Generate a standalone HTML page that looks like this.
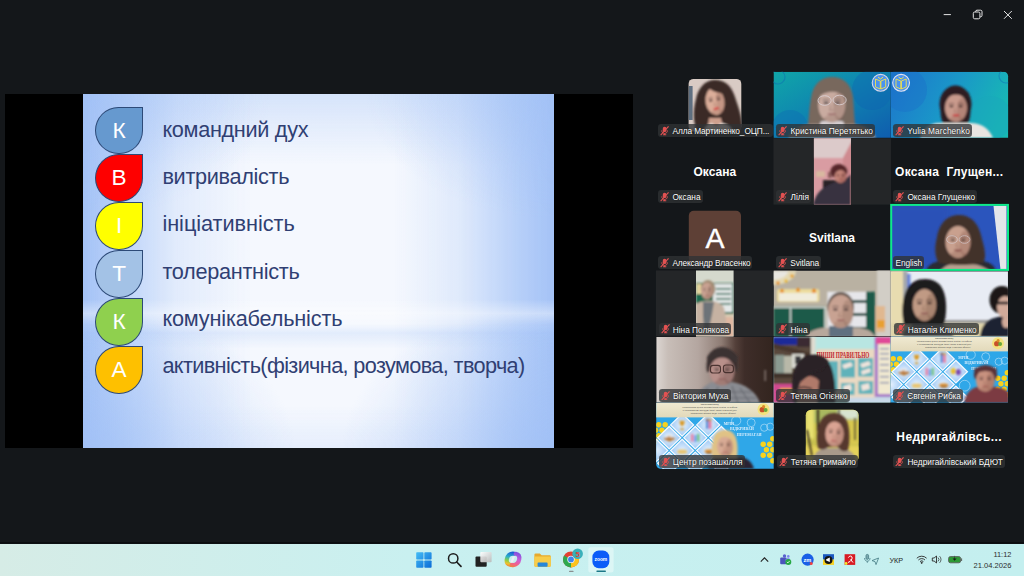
<!DOCTYPE html>
<html lang="uk">
<head>
<meta charset="utf-8">
<title>Zoom Meeting</title>
<style>
html,body{margin:0;padding:0;}
body{width:1024px;height:576px;overflow:hidden;background:#14171a;position:relative;font-family:"Liberation Sans",sans-serif;}
.abs{position:absolute;}
#share{left:4.5px;top:94px;width:628.2px;height:353.8px;background:#000;}
#slide{left:82.6px;top:94px;width:471.8px;height:353.8px;overflow:hidden;
 background:
  linear-gradient(180deg,rgba(166,196,246,0) 0%,rgba(166,196,246,0) 58%,rgba(255,255,255,.4) 62%,rgba(255,255,255,.1) 65%,rgba(166,196,246,.24) 67.5%,rgba(166,196,246,0) 72%),
  radial-gradient(ellipse 45% 40% at 0% 100%,rgba(160,192,246,.7) 0%,rgba(160,192,246,0) 100%),
  radial-gradient(ellipse 45% 40% at 100% 100%,rgba(160,192,246,.7) 0%,rgba(160,192,246,0) 100%),
  radial-gradient(ellipse 40% 35% at 0% 0%,rgba(160,192,246,.5) 0%,rgba(160,192,246,0) 100%),
  radial-gradient(ellipse 40% 35% at 100% 0%,rgba(160,192,246,.5) 0%,rgba(160,192,246,0) 100%),
  linear-gradient(90deg,#a4c2f6 0%,rgba(170,199,247,.8) 7%,rgba(190,212,249,.35) 20%,rgba(200,220,250,0) 36%,rgba(200,220,250,0) 66%,rgba(190,212,249,.4) 80%,rgba(170,199,247,.85) 93%,#a4c2f6 100%),
  linear-gradient(180deg,rgba(176,203,247,.45) 0%,rgba(176,203,247,0) 20%,rgba(176,203,247,0) 88%,rgba(176,203,247,.22) 100%),
  #f5f8fe;}
.drop{position:absolute;left:12.7px;width:47.7px;height:47.8px;border:0.8px solid #2d4a78;border-radius:50% 0 50% 50%;box-sizing:border-box;color:#fff;font-size:22.6px;text-align:center;line-height:45.4px;}
.ln{position:absolute;left:79.8px;font-size:21.7px;color:#303f73;white-space:nowrap;line-height:24px;}
.tile{position:absolute;width:117px;height:66px;overflow:hidden;}
.lbl{position:absolute;box-sizing:border-box;height:12.9px;line-height:15.2px;text-shadow:0 0 1.2px rgba(0,0,0,.9);background:rgba(48,50,53,.78);border-radius:3.2px;color:#fff;font-size:8.3px;white-space:nowrap;overflow:hidden;}
.lbl .mic{position:absolute;left:2.100px;top:1.900px;}
.big{position:absolute;width:117px;text-align:center;color:#fff;font-weight:bold;font-size:12px;line-height:16px;white-space:nowrap;}
#taskbar{left:0;top:543.5px;width:1024px;height:32.5px;background:linear-gradient(90deg,#d6ece6 0%,#c9f0f0 40%,#c4efef 100%);}
</style>
</head>
<body>
<div id="share" class="abs"></div>
<div id="slide" class="abs">
  <div class="drop" style="top:12.5px;background:#6699cf;">К</div>
  <div class="drop" style="top:60.4px;background:#fe0000;">В</div>
  <div class="drop" style="top:108.3px;background:#ffff00;">І</div>
  <div class="drop" style="top:156.2px;background:#a3c2e6;">Т</div>
  <div class="drop" style="top:204.1px;background:#8fd04e;">К</div>
  <div class="drop" style="top:252.0px;background:#fec000;">А</div>
  <div class="ln" style="top:24px;letter-spacing:-0.32px;">командний дух</div>
  <div class="ln" style="top:70.9px;letter-spacing:-0.32px;">витривалість</div>
  <div class="ln" style="top:118.4px;letter-spacing:-0.04px;">ініціативність</div>
  <div class="ln" style="top:165.8px;letter-spacing:-0.3px;">толерантність</div>
  <div class="ln" style="top:213.3px;letter-spacing:-0.18px;">комунікабельність</div>
  <div class="ln" style="top:260.2px;letter-spacing:-0.63px;">активність(фізична, розумова, творча)</div>
</div>
<svg class="abs" style="left:0;top:0" width="1024" height="576" viewBox="0 0 1024 576">
<defs>
<filter id="b1" x="-20%" y="-20%" width="140%" height="140%"><feGaussianBlur stdDeviation="1"/></filter>
<filter id="b2" x="-20%" y="-20%" width="140%" height="140%"><feGaussianBlur stdDeviation="1.4"/></filter>
<filter id="b3" x="-20%" y="-20%" width="140%" height="140%"><feGaussianBlur stdDeviation="3"/></filter>
<linearGradient id="gk" x1="0" y1="0" x2="1" y2="1"><stop offset="0" stop-color="#10a6a8"/><stop offset=".45" stop-color="#0f86b0"/><stop offset="1" stop-color="#0f5cae"/></linearGradient>
<linearGradient id="gy" x1="0" y1="0.2" x2="1" y2="0.5"><stop offset="0" stop-color="#1d78cc"/><stop offset=".5" stop-color="#1a97c8"/><stop offset="1" stop-color="#18b8b4"/></linearGradient>
<linearGradient id="gv" x1="0" y1="0" x2="1" y2="0"><stop offset="0" stop-color="#dcd6d2"/><stop offset=".1" stop-color="#c8beb8"/><stop offset=".36" stop-color="#b4a6a0"/><stop offset=".56" stop-color="#8e7c74"/><stop offset=".68" stop-color="#54403a"/><stop offset=".76" stop-color="#3e2d29"/><stop offset="1" stop-color="#33251f"/></linearGradient>
<linearGradient id="gcream" x1="0" y1="0" x2="0" y2="1"><stop offset="0" stop-color="#f0ead2"/><stop offset="1" stop-color="#e2d9ba"/></linearGradient>
<radialGradient id="gdia" cx=".5" cy=".5" r=".6"><stop offset="0" stop-color="#e6f1fe"/><stop offset="1" stop-color="#8fc0f2"/></radialGradient>
<clipPath id="c00"><rect x="656.3" y="71.8" width="117.25" height="66.0"/></clipPath>
<clipPath id="c01"><rect x="773.5" y="71.8" width="117.25" height="66.0"/></clipPath>
<clipPath id="c02"><rect x="890.7" y="71.8" width="117.25" height="66.0"/></clipPath>
<clipPath id="c10"><rect x="656.3" y="137.9" width="117.25" height="66.0"/></clipPath>
<clipPath id="c11"><rect x="773.5" y="137.9" width="117.25" height="66.0"/></clipPath>
<clipPath id="c12"><rect x="890.7" y="137.9" width="117.25" height="66.0"/></clipPath>
<clipPath id="c20"><rect x="656.3" y="204.0" width="117.25" height="66.0"/></clipPath>
<clipPath id="c21"><rect x="773.5" y="204.0" width="117.25" height="66.0"/></clipPath>
<clipPath id="c22"><rect x="890.7" y="204.0" width="117.25" height="66.0"/></clipPath>
<clipPath id="c30"><rect x="656.3" y="270.2" width="117.25" height="66.0"/></clipPath>
<clipPath id="c31"><rect x="773.5" y="270.2" width="117.25" height="66.0"/></clipPath>
<clipPath id="c32"><rect x="890.7" y="270.2" width="117.25" height="66.0"/></clipPath>
<clipPath id="c40"><rect x="656.3" y="336.4" width="117.25" height="66.0"/></clipPath>
<clipPath id="c41"><rect x="773.5" y="336.4" width="117.25" height="66.0"/></clipPath>
<clipPath id="c42"><rect x="890.7" y="336.4" width="117.25" height="66.0"/></clipPath>
<clipPath id="c50"><rect x="656.3" y="402.6" width="117.25" height="66.0"/></clipPath>
<clipPath id="c51"><rect x="773.5" y="402.6" width="117.25" height="66.0"/></clipPath>
<clipPath id="c52"><rect x="890.7" y="402.6" width="117.25" height="66.0"/></clipPath>
<clipPath id="cav1"><rect x="688.6" y="78.9" width="52.7" height="52.7" rx="5"/></clipPath>
<clipPath id="cav2"><rect x="805.8" y="409.7" width="52.8" height="52.8" rx="5.5"/></clipPath>
<clipPath id="clil"><rect x="813.9" y="138.2" width="37.1" height="66.4"/></clipPath>
<clipPath id="cnp"><rect x="696" y="270.6" width="37.6" height="65.8"/></clipPath>
<clipPath id="ctr"><path d="M890.7 71.8h113a4.4 4.4 0 0 1 4.4 4.4v61.6h-117.4z"/></clipPath>
<clipPath id="cbl"><path d="M656.2 402.7h117.5v66h-113a4.5 4.5 0 0 1-4.5-4.5z"/></clipPath>
</defs>
<g clip-path="url(#cav1)">
<rect x="688" y="78" width="54" height="54" fill="#d9cbc4"/>
<rect x="688.6" y="86" width="4" height="34" fill="#5f6f80"/>
<g filter="url(#b1)">
<path d="M697 132c-4-10-4-22-1-33 2-11 9-19 19-19 11 0 17 7 20 17 3 10 8 20 7 35z" fill="#3b2a26"/>
<path d="M709 118h12l3 14h-17z" fill="#cfa08e"/>
<ellipse cx="715" cy="101.5" rx="9.4" ry="13.6" fill="#dcae9a" transform="rotate(-10 715 101.5)"/>
<path d="M703 100c1-10 6-15 14-15 6 0 10 3 12 9-8 0-16-2-20-6-2 4-4 8-6 12z" fill="#3b2a26"/>
<path d="M703 132c2-5 5-8 9-9l4 4 5-4c6 1 10 4 12 9z" fill="#ece2dc"/>
<g transform="rotate(-10 715 101.5)"><ellipse cx="720.2" cy="102.9" rx="4.2" ry="10.9" fill="#8a5a4a" opacity=".28"/><ellipse cx="715.0" cy="112.1" rx="5.6" ry="2.7" fill="#8a5a4a" opacity=".25"/><ellipse cx="711.1" cy="99.9" rx="1.9" ry="1.0" fill="#2a1a1c" opacity=".8"/><ellipse cx="718.9" cy="99.9" rx="1.9" ry="1.0" fill="#2a1a1c" opacity=".8"/><path d="M708.7 97.6q2.4 -1.1 4.7 0M716.6 97.6q2.4 -1.1 4.7 0" stroke="#2a1a1c" stroke-width="0.8" fill="none" opacity=".6"/><path d="M714.4 101.8l-0.9 3.8h2.8" stroke="#8a5a4a" stroke-width="0.7" fill="none" opacity=".55"/><ellipse cx="715.0" cy="108.6" rx="3.0" ry="1.0" fill="#d4141c" opacity=".85"/></g>
</g></g>
<g clip-path="url(#c01)"><rect x="773.5" y="71.8" width="118.25" height="66.6" fill="url(#gk)"/>
<circle cx="778" cy="77" r="7" fill="none" stroke="#0f7fae" stroke-width="1.2" opacity=".8"/>
<circle cx="790" cy="128" r="18" fill="#0e6fb4" opacity=".45"/>
<circle cx="872" cy="90" r="20" fill="#0d62b2" opacity=".35"/>
<g filter="url(#b1)">
<path d="M805 138c0-6 1-10 3-14 1-8 1-16 3-26 2-14 10-21 21-21 12 0 19 7 21 20 1 10 1 19 2 27 2 4 3 9 3 14z" fill="#78675d"/>
<path d="M788 138c3-9 12-13 24-14h40c12 1 20 5 24 14z" fill="#a39288"/>
<rect x="820" y="121" width="24" height="9" rx="3" fill="#d6cfd2"/>
<ellipse cx="831.8" cy="105" rx="13.6" ry="17.5" fill="#c9aba0"/>
<path d="M817 98q14-12 29-1l2-9q-16-12-32 0z" fill="#78675d"/>
<g transform="rotate(0 831.8 105)"><ellipse cx="839.3" cy="106.8" rx="6.1" ry="14.0" fill="#7a5a50" opacity=".28"/><ellipse cx="831.8" cy="118.7" rx="8.2" ry="3.5" fill="#7a5a50" opacity=".25"/><ellipse cx="826.1" cy="102.9" rx="2.7" ry="1.3" fill="#4a4448" opacity=".8"/><ellipse cx="837.5" cy="102.9" rx="2.7" ry="1.3" fill="#4a4448" opacity=".8"/><path d="M822.7 99.9q3.4 -1.4 6.8 0M834.1 99.9q3.4 -1.4 6.8 0" stroke="#4a4448" stroke-width="1.1" fill="none" opacity=".6"/><path d="M831.0 105.3l-1.4 4.9h4.1" stroke="#7a5a50" stroke-width="0.9" fill="none" opacity=".55"/><ellipse cx="831.8" cy="114.1" rx="4.4" ry="1.2" fill="#9a6a68" opacity=".85"/></g>
</g>
<g fill="none" stroke="#dcd4d8" stroke-width=".9" opacity=".9"><ellipse cx="824.6" cy="100.5" rx="6.6" ry="4.8"/><ellipse cx="839.6" cy="100" rx="6.6" ry="4.8"/></g>
<circle cx="880.6" cy="82.8" r="8.4" fill="#4a93f0" stroke="#d8d8e8" stroke-width="1.1"/><path d="M875.5 79l4.8 2v8l-4.8-2zM885.7 79l-4.8 2v8l4.8-2z" fill="none" stroke="#f3e24a" stroke-width=".9"/><path d="M878 77l2.6 2 2.6-2" fill="none" stroke="#f3e24a" stroke-width="1"/>
</g>
<g clip-path="url(#ctr)"><rect x="890.7" y="71.8" width="118.25" height="66.6" fill="url(#gy)"/>
<circle cx="1006" cy="76" r="7" fill="none" stroke="#1590b8" stroke-width="1.2"/>
<circle cx="990" cy="118" r="22" fill="#19a8bc" opacity=".5"/>
<circle cx="905" cy="90" r="22" fill="#1c6ec8" opacity=".4"/>
<g filter="url(#b1)">
<path d="M920 138c3-9 9-14 18-15h34c11 1 17 6 21 15z" fill="#e9e5e1"/>
<ellipse cx="955.5" cy="104" rx="16" ry="18.5" fill="#2d1c22"/>
<path d="M941 106c-1 8 0 13 2 17h25c2-4 3-9 2-17z" fill="#2d1c22"/>
<ellipse cx="956" cy="108" rx="11" ry="14" fill="#c99a8c"/>
<path d="M944 100q12-11 24 0l1-7q-13-9-26 0z" fill="#2d1c22"/>
<g transform="rotate(0 956 108)"><ellipse cx="962.0" cy="109.4" rx="5.0" ry="11.2" fill="#7a4a40" opacity=".28"/><ellipse cx="956.0" cy="118.9" rx="6.6" ry="2.8" fill="#7a4a40" opacity=".25"/><ellipse cx="951.4" cy="106.3" rx="2.2" ry="1.1" fill="#2a1a1c" opacity=".8"/><ellipse cx="960.6" cy="106.3" rx="2.2" ry="1.1" fill="#2a1a1c" opacity=".8"/><path d="M948.6 103.9q2.8 -1.1 5.5 0M957.9 103.9q2.8 -1.1 5.5 0" stroke="#2a1a1c" stroke-width="0.8" fill="none" opacity=".6"/><path d="M955.3 108.3l-1.1 3.9h3.3" stroke="#7a4a40" stroke-width="0.7" fill="none" opacity=".55"/><ellipse cx="956.0" cy="115.3" rx="3.5" ry="1.0" fill="#c8202a" opacity=".85"/></g>
</g>
<circle cx="901.1" cy="82.8" r="8.4" fill="#4a93f0" stroke="#e4e4f0" stroke-width="1.1"/><path d="M896 79l4.8 2v8l-4.8-2zM906.2 79l-4.8 2v8l4.8-2z" fill="none" stroke="#f3e24a" stroke-width=".9"/><path d="M898.5 77l2.6 2 2.6-2" fill="none" stroke="#f3e24a" stroke-width="1"/>
</g>
<rect x="773.5" y="138.2" width="117.45" height="66.4" fill="#242628"/>
<g clip-path="url(#clil)"><rect x="813" y="138" width="39" height="67" fill="#d99ca2"/>
<g filter="url(#b1)">
<path d="M813 138h39v3l-9 17h-30z" fill="#dccaca"/>
<path d="M843 158l9-17v64h-9z" fill="#cf8a90"/>
<rect x="816" y="171" width="9" height="6" fill="#d8b8a0"/><rect x="828" y="172" width="4" height="6" fill="#8a5a5a"/>
<rect x="823" y="180" width="14" height="25" fill="#2a2228"/>
<path d="M813 205c2-9 7-16 14-19 5-3 9-5 12-5 4 0 8-3 12-7v31z" fill="#37323f"/>
<ellipse cx="839" cy="171.5" rx="8.6" ry="7.6" fill="#56282a"/>
<ellipse cx="840.5" cy="176.5" rx="6" ry="6.4" fill="#c48478"/>
<g transform="rotate(0 840.5 176.5)"><ellipse cx="843.8" cy="177.1" rx="2.7" ry="5.1" fill="#7a3a38" opacity=".28"/><ellipse cx="840.5" cy="181.5" rx="3.6" ry="1.3" fill="#7a3a38" opacity=".25"/><ellipse cx="838.0" cy="175.7" rx="1.2" ry="0.5" fill="#3a1a1c" opacity=".8"/><ellipse cx="843.0" cy="175.7" rx="1.2" ry="0.5" fill="#3a1a1c" opacity=".8"/><path d="M836.5 174.6q1.5 -0.5 3.0 0M841.5 174.6q1.5 -0.5 3.0 0" stroke="#3a1a1c" stroke-width="0.5" fill="none" opacity=".6"/><path d="M840.1 176.6l-0.6 1.8h1.8" stroke="#7a3a38" stroke-width="0.5" fill="none" opacity=".55"/><ellipse cx="840.5" cy="179.8" rx="1.9" ry="0.4" fill="#8a3a38" opacity=".85"/></g>
</g></g>
<rect x="688.8" y="210.8" width="52.2" height="52.2" rx="5" fill="#5e4036"/>
<g clip-path="url(#c22)"><rect x="890.3" y="204" width="118.5" height="66.7" fill="#2b55bd"/>
<rect x="890" y="204" width="60" height="67" fill="#2a4fb2" opacity=".5" filter="url(#b3)"/>
<path d="M993.5 206h13v64h-6z" fill="#e4e6ea"/>
<g filter="url(#b1)">
<path d="M926 271c2-6 7-9 14-10h42c8 1 12 4 14 10z" fill="#2a2a30"/>
<path d="M940 271c4-5 10-8 20-8 12 0 22 2 30 8z" fill="#b8a090"/>
<path d="M938 262c-4-8-3-17-1-25 2-12 9-22 22-22 12 0 19 8 22 20 2 9 6 18 3 27-8 4-36 4-46 0z" fill="#43332c"/>
<ellipse cx="958" cy="242" rx="12.5" ry="16" fill="#c9a08e"/>
<path d="M945 232q10-12 27-2l0-6q-12-10-27 0z" fill="#43332c"/>
<g transform="rotate(0 958 242)"><ellipse cx="964.9" cy="243.6" rx="5.6" ry="12.8" fill="#7a4a40" opacity=".28"/><ellipse cx="958.0" cy="254.5" rx="7.5" ry="3.2" fill="#7a4a40" opacity=".25"/><ellipse cx="952.8" cy="240.1" rx="2.5" ry="1.2" fill="#3a2a28" opacity=".8"/><ellipse cx="963.2" cy="240.1" rx="2.5" ry="1.2" fill="#3a2a28" opacity=".8"/><path d="M949.6 237.4q3.1 -1.3 6.2 0M960.1 237.4q3.1 -1.3 6.2 0" stroke="#3a2a28" stroke-width="1.0" fill="none" opacity=".6"/><path d="M957.2 242.3l-1.2 4.5h3.8" stroke="#7a4a40" stroke-width="0.8" fill="none" opacity=".55"/><ellipse cx="958.0" cy="250.3" rx="4.0" ry="1.1" fill="#7a3a38" opacity=".85"/></g>
</g>
<g fill="none" stroke="#d6ced4" stroke-width=".9" opacity=".7"><ellipse cx="952" cy="239.500" rx="5.400" ry="3.800"/><ellipse cx="964.500" cy="239.500" rx="5.400" ry="3.800"/></g>
</g>
<rect x="891.2" y="204.9" width="116.8" height="65" fill="none" stroke="#0eea8a" stroke-width="2"/>
<rect x="655.9" y="270.5" width="117.4" height="65.9" fill="#242628"/>
<g clip-path="url(#cnp)"><rect x="695" y="270" width="40" height="67" fill="#d5d9cd"/>
<g filter="url(#b1)">
<rect x="696" y="283" width="38" height="31" fill="#1f6b50"/>
<rect x="696.5" y="284" width="5" height="10" fill="#e8d8a0"/>
<rect x="713" y="284" width="19.5" height="28" fill="#e4e8e8"/>
<g fill="#2a6a54"><rect x="716" y="288" width="15" height="1.6"/><rect x="716" y="293" width="15" height="1.6"/><rect x="716" y="298" width="15" height="1.6"/><rect x="716" y="303" width="15" height="1.6"/></g>
<rect x="696" y="314" width="38" height="3" fill="#d8ccb4"/>
<rect x="718" y="317" width="16" height="20" fill="#dfb8a2"/>
<path d="M696 337v-33c3-2 7-3 10-3h7c5 1 9 3 11 7 2 8 3 18 2 29z" fill="#c6b2a2"/>
<path d="M703 302h11l-2 12-3 15h-5l-1-14z" fill="#6d7378"/>
<ellipse cx="708" cy="289" rx="7.4" ry="9" fill="#a08a72"/>
<ellipse cx="707" cy="291" rx="6" ry="8.6" fill="#c9a292"/>
<g transform="rotate(0 707 291)"><ellipse cx="710.3" cy="291.9" rx="2.7" ry="6.9" fill="#7a5a4a" opacity=".28"/><ellipse cx="707.0" cy="297.7" rx="3.6" ry="1.7" fill="#7a5a4a" opacity=".25"/><ellipse cx="704.5" cy="290.0" rx="1.2" ry="0.6" fill="#4a3a38" opacity=".8"/><ellipse cx="709.5" cy="290.0" rx="1.2" ry="0.6" fill="#4a3a38" opacity=".8"/><path d="M703.0 288.5q1.5 -0.7 3.0 0M708.0 288.5q1.5 -0.7 3.0 0" stroke="#4a3a38" stroke-width="0.5" fill="none" opacity=".6"/><path d="M706.6 291.2l-0.6 2.4h1.8" stroke="#7a5a4a" stroke-width="0.5" fill="none" opacity=".55"/><ellipse cx="707.0" cy="295.5" rx="1.9" ry="0.6" fill="#9a5a58" opacity=".85"/></g>
</g></g>
<g clip-path="url(#c31)"><rect x="773.5" y="270.7" width="117.2" height="66" fill="#b9b1a2"/>
<g filter="url(#b1)">
<rect x="877" y="270" width="14" height="67" fill="#d2cec6"/>
<path d="M773 271h23c0 7-8 13-23 14z" fill="#e4d9b4"/><path d="M773 271h15c0 4-5 8-15 9z" fill="#e8e6e0"/><circle cx="792" cy="276" r="1.800" fill="#e8a020"/><circle cx="786" cy="281" r="1.800" fill="#e8b830"/><circle cx="778" cy="283" r="1.800" fill="#e89020"/>
<rect x="776.9" y="289" width="42.5" height="13" rx="2" fill="#ecdc9c"/><rect x="779" y="293" width="38" height="8" fill="#f0ecdc"/>
<circle cx="782" cy="291" r="2" fill="#e89020"/><circle cx="798" cy="290" r="2" fill="#e89020"/><circle cx="814" cy="291" r="2.2" fill="#e89020"/>
<rect x="773.5" y="306.5" width="51.5" height="31" fill="#1f5a49"/>
<path d="M773.5 307.3h51.5M790.5 307v30M825 307v30" stroke="#dfe6e2" stroke-width="1.3" fill="none"/>
<rect x="827.3" y="291.7" width="44" height="45" fill="#e6e6ea"/>
<rect x="866" y="291.7" width="9" height="45" fill="#1f5a49"/>
<g fill="#1f4a40"><rect x="852" y="300" width="14" height="3"/><rect x="852" y="313" width="14" height="3"/><rect x="852" y="327" width="14" height="3"/></g>
<rect x="876" y="306" width="9" height="26" fill="#e0b890"/><rect x="877" y="320" width="8" height="8" fill="#e8a030"/>
<path d="M806 337c2-5 8-8 16-9h38c8 1 13 4 15 9z" fill="#b8a89c"/>
<path d="M829 337v-11h24v11z" fill="#5e7080"/>
<ellipse cx="840.7" cy="307" rx="13.4" ry="15" fill="#6b5b52"/>
<ellipse cx="840.7" cy="311.5" rx="12.6" ry="16.5" fill="#c8a292"/>
<g transform="rotate(0 840.7 311.5)"><ellipse cx="847.6" cy="313.1" rx="5.7" ry="13.2" fill="#7a5a4a" opacity=".28"/><ellipse cx="840.7" cy="324.4" rx="7.6" ry="3.3" fill="#7a5a4a" opacity=".25"/><ellipse cx="835.4" cy="309.5" rx="2.5" ry="1.2" fill="#4a3a3a" opacity=".8"/><ellipse cx="846.0" cy="309.5" rx="2.5" ry="1.2" fill="#4a3a3a" opacity=".8"/><path d="M832.3 306.7q3.1 -1.3 6.3 0M842.8 306.7q3.1 -1.3 6.3 0" stroke="#4a3a3a" stroke-width="1.0" fill="none" opacity=".6"/><path d="M839.9 311.8l-1.3 4.6h3.8" stroke="#7a5a4a" stroke-width="0.8" fill="none" opacity=".55"/><ellipse cx="840.7" cy="320.1" rx="4.0" ry="1.2" fill="#9a6460" opacity=".85"/></g>
</g></g>
<g clip-path="url(#c32)"><rect x="890.7" y="271.4" width="117.5" height="65.2" fill="#e8ecf4"/>
<g filter="url(#b1)">
<rect x="890" y="271" width="13.5" height="66" fill="#e8dcb0"/>
<rect x="903" y="271" width="4.5" height="52" fill="#a4a8ac"/>
<rect x="907" y="274" width="3.4" height="32" fill="#4a6ad0" opacity=".8"/>
<rect x="903" y="320" width="106" height="3.4" fill="#9a9a98"/>
<rect x="890" y="323.4" width="119" height="14" fill="#e0d4a8"/>
<path d="M902 337c2-8 8-12 16-13h18c9 1 15 5 18 13z" fill="#6a6a66"/>
<path d="M904 325c-3-12-2-27 3-36 4-7 10-10 18-10 9 0 15 4 18 11 4 9 4 23 1 35z" fill="#1e1a1e"/>
<ellipse cx="924.5" cy="305" rx="11.8" ry="16" fill="#c09a84"/>
<path d="M912 298q4-10 12-11 9 0 13 11l2-8q-6-10-15-10-9 0-14 10z" fill="#1e1a1e"/>
<g transform="rotate(0 924.5 305)"><ellipse cx="931.0" cy="306.6" rx="5.3" ry="12.8" fill="#6a4a3a" opacity=".28"/><ellipse cx="924.5" cy="317.5" rx="7.1" ry="3.2" fill="#6a4a3a" opacity=".25"/><ellipse cx="919.5" cy="303.1" rx="2.4" ry="1.2" fill="#2a1a1c" opacity=".8"/><ellipse cx="929.5" cy="303.1" rx="2.4" ry="1.2" fill="#2a1a1c" opacity=".8"/><path d="M916.6 300.4q3.0 -1.3 5.9 0M926.5 300.4q3.0 -1.3 5.9 0" stroke="#2a1a1c" stroke-width="1.0" fill="none" opacity=".6"/><path d="M923.8 305.3l-1.2 4.5h3.5" stroke="#6a4a3a" stroke-width="0.8" fill="none" opacity=".55"/><ellipse cx="924.5" cy="313.3" rx="3.8" ry="1.1" fill="#8a5450" opacity=".85"/></g>
<path d="M980 337c1-10 6-17 14-19l15-4v23z" fill="#1a2030"/>
<ellipse cx="1002" cy="300" rx="12.5" ry="14" fill="#1a1618"/>
<ellipse cx="1005" cy="307" rx="8" ry="11" fill="#d2aa9a"/>
<path d="M996 303h13" stroke="#1a1618" stroke-width="2.6"/>
<ellipse cx="1006" cy="322" rx="4" ry="6" fill="#d2aa9a"/>
</g></g>
<g clip-path="url(#c40)"><rect x="656.2" y="337" width="116.4" height="65.8" fill="url(#gv)"/>
<g filter="url(#b1)">
<rect x="764.6" y="370" width="1.2" height="11" fill="#9a8a84"/>
<path d="M694 403c3-10 9-18 19-21h18c15 2 25 10 29 21z" fill="#8a8c92"/>
<path d="M700 400l8-12M712 403l6-16M740 388l10 15M732 386l6 17M704 392h48M700 398h56" stroke="#5e6068" stroke-width="1.200" opacity=".8"/>
<path d="M707 372c-2-12 2-24 15-24 14 0 17 12 15 24z" fill="#3b3030"/>
<ellipse cx="722" cy="371.500" rx="12.400" ry="14" fill="#b8908a"/>
<path d="M708 366q6-9 14-9 9 0 15 9l1-9q-7-10-16-10-9 0-15 10z" fill="#3b3030"/>
<g transform="rotate(0 722 371.5)"><ellipse cx="728.8" cy="372.9" rx="5.6" ry="11.2" fill="#5a3a38" opacity=".28"/><ellipse cx="722.0" cy="382.4" rx="7.4" ry="2.8" fill="#5a3a38" opacity=".25"/><ellipse cx="716.8" cy="369.8" rx="2.5" ry="1.1" fill="#3a2a2a" opacity=".8"/><ellipse cx="727.2" cy="369.8" rx="2.5" ry="1.1" fill="#3a2a2a" opacity=".8"/><path d="M713.7 367.4q3.1 -1.1 6.2 0M724.1 367.4q3.1 -1.1 6.2 0" stroke="#3a2a2a" stroke-width="0.8" fill="none" opacity=".6"/><path d="M721.3 371.8l-1.2 3.9h3.7" stroke="#5a3a38" stroke-width="0.7" fill="none" opacity=".55"/><ellipse cx="722.0" cy="378.8" rx="4.0" ry="1.0" fill="#8a5a58" opacity=".85"/></g>
</g>
<g fill="none" stroke="#3a2624" stroke-width="1.100" opacity=".85"><rect x="710.500" y="365.400" width="10" height="7.600" rx="2.600"/><rect x="723.400" y="365" width="10" height="7.600" rx="2.600"/></g>
</g>
<g clip-path="url(#c41)"><rect x="773.5" y="337" width="117.2" height="66" fill="#b8e6e2"/>
<g filter="url(#b1)">
<rect x="773" y="337" width="38" height="66" fill="#5a4a3e"/>
<rect x="773" y="337" width="24" height="8" fill="#1a2a98"/><rect x="797" y="337" width="13" height="10" fill="#3a2a30"/>
<path d="M773 343l38 10v5l-38-10z" fill="#4a382e"/>
<rect x="775" y="355" width="9" height="19" fill="#8a9a90"/><rect x="784" y="356" width="8" height="18" fill="#b8b8a8"/><rect x="792" y="354" width="12" height="14" fill="#d8d8d0"/><rect x="795" y="356" width="6" height="8" fill="#3a3a40"/>
<rect x="773" y="373" width="26" height="5" fill="#40302a"/>
<rect x="773" y="384" width="28" height="19" fill="#d04890"/><rect x="780" y="388" width="14" height="6" fill="#e8a040"/>
<rect x="811" y="337" width="4.5" height="18" fill="#e0dcd0"/>
<rect x="817" y="349" width="59.6" height="49" fill="#ead9c2"/>
<g fill="#5fb2ba"><rect x="840.5" y="359.5" width="14.5" height="18"/><rect x="858" y="358" width="15" height="18.5"/><rect x="841" y="383" width="13.5" height="12"/><rect x="858.5" y="381" width="14.5" height="13"/><rect x="826" y="361" width="12" height="30"/></g>
<g fill="#f0e4dc"><path d="M842 365l9-3 2 4-9 3z"/><path d="M860 364l9-3 2 4-9 3z"/><path d="M861 371l9-3 1 4-9 3z"/><path d="M843 386l8-2 1 6-8 2z"/><path d="M861 385l8-2 1 6-8 2z"/></g>
<rect x="874.7" y="337" width="16.5" height="60" fill="#a878c8"/><rect x="876" y="337" width="15" height="7" fill="#e04898"/><rect x="878" y="344" width="13" height="50" fill="#f0e8d0"/>
<g fill="#8a90b0"><rect x="880" y="348" width="9" height="1.4"/><rect x="880" y="353" width="9" height="1.4"/><rect x="880" y="358" width="9" height="1.4"/><rect x="880" y="364" width="9" height="1.4"/><rect x="880" y="370" width="9" height="1.4"/><rect x="880" y="376" width="9" height="1.4"/><rect x="880" y="382" width="9" height="1.4"/></g>
<rect x="848" y="397.5" width="43" height="5.5" fill="#c8d8e8"/>
<path d="M794 403c-2-14-2-26 2-36 4-8 10-12 18-12 9 0 15 5 18 14 3 10 4 22 3 34z" fill="#2a2226"/>
<path d="M796 386c0-6 4-10 11-10 6 0 10 2 12 5l-2 22h-20z" fill="#b07a6a"/>
<path d="M798 388q8-2 14 1" stroke="#2a2226" stroke-width="1.4" fill="none"/>
</g>
<text x="816.500" y="358.200" font-family="Liberation Serif,serif" font-weight="bold" font-size="7.800" fill="#c02830" textLength="52.800" lengthAdjust="spacingAndGlyphs">ПИШИ ПРАВИЛЬНО</text>
<path d="M794 403c-2-14-2-26 2-36 4-8 10-12 18-12 6 0 11 2 14 7l-6 8-10 2-12 10z" fill="#2a2226" filter="url(#b1)"/>
</g>
<g clip-path="url(#c42)"><rect x="890.2" y="336.2" width="118.5" height="67" fill="#2fa7e8"/>
<circle cx="893.2" cy="358.7" r="2.7" fill="#f8d21e"/>
<circle cx="899.7" cy="358.7" r="2.7" fill="#f8d21e"/>
<circle cx="890.2" cy="364.2" r="2.7" fill="#f8d21e"/>
<circle cx="896.5" cy="364.2" r="2.7" fill="#f8d21e"/>
<circle cx="893.2" cy="369.7" r="2.7" fill="#f8d21e"/>
<circle cx="890.2" cy="375.2" r="2.7" fill="#f8d21e"/>
<circle cx="902.7" cy="364.2" r="2.7" fill="#f8d21e"/>
<circle cx="997.7" cy="378.2" r="2.7" fill="#f8d21e"/>
<circle cx="1004.2" cy="378.2" r="2.7" fill="#f8d21e"/>
<circle cx="1007.3" cy="372.7" r="2.7" fill="#f8d21e"/>
<circle cx="1000.9" cy="383.7" r="2.7" fill="#f8d21e"/>
<circle cx="1007.3" cy="383.7" r="2.7" fill="#f8d21e"/>
<circle cx="997.7" cy="389.2" r="2.7" fill="#f8d21e"/>
<circle cx="1004.2" cy="389.2" r="2.7" fill="#f8d21e"/>
<circle cx="1007.3" cy="394.7" r="2.7" fill="#f8d21e"/>
<g fill="none" stroke="#bfe2f8" stroke-width=".7" opacity=".9"><circle cx="970.7" cy="354.7" r="4.6"/><circle cx="985.7" cy="356.7" r="4"/><circle cx="964.7" cy="385.7" r="5.4"/><circle cx="998.7" cy="361.7" r="3.6"/><circle cx="1004.7" cy="360.7" r="3.6"/></g>
<path d="M916.6 347.7L928.1 358.9L916.6 370.1L905.1 358.9z" fill="url(#gdia)" stroke="#f4f9ff" stroke-width="1.3"/>
<path d="M942.7 347.7L954.2 358.9L942.7 370.1L931.2 358.9z" fill="url(#gdia)" stroke="#f4f9ff" stroke-width="1.3"/>
<path d="M903.7 360.5L915.2 371.7L903.7 382.9L892.2 371.7z" fill="url(#gdia)" stroke="#f4f9ff" stroke-width="1.3"/>
<path d="M929.8 360.5L941.3 371.7L929.8 382.9L918.3 371.7z" fill="url(#gdia)" stroke="#f4f9ff" stroke-width="1.3"/>
<path d="M955.9 360.5L967.4 371.7L955.9 382.9L944.4 371.7z" fill="url(#gdia)" stroke="#f4f9ff" stroke-width="1.3"/>
<path d="M916.6 373.3L928.1 384.5L916.6 395.7L905.1 384.5z" fill="url(#gdia)" stroke="#f4f9ff" stroke-width="1.3"/>
<path d="M942.7 373.3L954.2 384.5L942.7 395.7L931.2 384.5z" fill="url(#gdia)" stroke="#f4f9ff" stroke-width="1.3"/>
<path d="M890.7 373.3L902.2 384.5L890.7 395.7L879.2 384.5z" fill="url(#gdia)" stroke="#f4f9ff" stroke-width="1.3"/>
<path d="M903.7 386.1L915.2 397.3L903.7 408.5L892.2 397.3z" fill="url(#gdia)" stroke="#f4f9ff" stroke-width="1.3"/>
<path d="M929.8 386.1L941.3 397.3L929.8 408.5L918.3 397.3z" fill="url(#gdia)" stroke="#f4f9ff" stroke-width="1.3"/>
<path d="M955.9 386.1L967.4 397.3L955.9 408.5L944.4 397.3z" fill="url(#gdia)" stroke="#f4f9ff" stroke-width="1.3"/>
<rect x="890.2" y="336.2" width="118.5" height="15.2" fill="url(#gcream)"/>
<g filter="url(#b1)">
<path d="M914.1 354.7h5c0 4-1 5-2.5 5.4v2.2h1.6v1.6h-3.2v-1.6h1.6v-2.2c-1.5-.4-2.5-1.4-2.5-5.4z" fill="#d89a28"/>
<rect x="940.7" y="354.7" width="2.2" height="8.4" rx="1" fill="#3a7ad0"/><rect x="943.5" y="354.7" width="2.2" height="8.4" rx="1" fill="#e86a90"/><circle cx="941.8000000000001" cy="354.09999999999997" r="1.3" fill="#7a4a30"/><circle cx="944.6" cy="354.09999999999997" r="1.3" fill="#c89030"/>
<path d="M897.7 372.7l6-2.6 6.5 2.6-6.2 3z" fill="#b87a3a"/><rect x="900.7" y="368.7" width="1.6" height="3" fill="#f0e8e0"/><rect x="904.3000000000001" y="368.3" width="1.6" height="3.4" fill="#f0e8e0"/>
<rect x="925.7" y="367.7" width="2" height="8" rx="1" fill="#e86a90"/><rect x="928.7" y="368.7" width="2" height="7.6" rx="1" fill="#4a8ae0"/><rect x="931.7" y="367.7" width="2" height="8" rx="1" fill="#5ab86a"/>
<ellipse cx="953.3000000000001" cy="371.09999999999997" rx="2.6" ry="3.2" fill="#e8c030"/><ellipse cx="958.3000000000001" cy="372.09999999999997" rx="2.6" ry="3.2" fill="#7a4ab0"/>
<ellipse cx="916.7" cy="385.7" rx="5" ry="2.2" fill="#e8c470"/><ellipse cx="943.7" cy="385.3" rx="4.6" ry="2" fill="#d8923a"/><rect x="940.7" y="386.3" width="6" height="1.4" fill="#8a5a2a"/>
</g>
<g font-family="Liberation Serif,serif" font-size="1.9" font-weight="bold" fill="#4a4a48" text-anchor="middle">
<text x="944.2" y="339.3">Комунальний заклад</text>
<text x="944.2" y="342.2" textLength="55">«Роменський центр позашкільної освіти та роботи</text>
<text x="944.2" y="345.0" textLength="54">з талановитою молоддю імені Івана Кавалерідзе»</text>
<text x="947.7" y="347.8" textLength="45">Роменської міської ради Сумської області</text></g>
<circle cx="998.0" cy="343.3" r="6" fill="#f3e37e"/><circle cx="996.7" cy="343.7" r="2.6" fill="#c8502a"/><circle cx="1000.1" cy="344.09999999999997" r="2" fill="#6aa83a"/><circle cx="998.1" cy="340.7" r="1.6" fill="#d88a2a"/>
<g font-family="Liberation Serif,serif" font-size="3.7" font-weight="bold" fill="#e8f4ff" opacity=".92">
<text x="958.3000000000001" y="358.5" textLength="10.2" lengthAdjust="spacingAndGlyphs">МРІЙ</text>
<text x="964.5" y="364.3" textLength="23.8" lengthAdjust="spacingAndGlyphs">ВІДКРИВАЙ</text>
<text x="971.2" y="370.09999999999997" textLength="24.8" lengthAdjust="spacingAndGlyphs">ПЕРЕМАГАЙ</text></g>
<g filter="url(#b1)"><path d="M964 403.5c1-9 6-15 14-17h14c9 1 14 3 17 6v11z" fill="#7c3a42"/><ellipse cx="985.5" cy="374.5" rx="11.6" ry="9.6" fill="#5a3038"/><ellipse cx="985.3" cy="380.6" rx="9.4" ry="11.2" fill="#c8927f"/><path d="M975 374q10-6 21 0l1-5q-11-7-23 0z" fill="#5a3038"/><g transform="rotate(0 985.3 380.6)"><ellipse cx="990.5" cy="381.7" rx="4.2" ry="9.0" fill="#7a4a40" opacity=".28"/><ellipse cx="985.3" cy="389.3" rx="5.6" ry="2.2" fill="#7a4a40" opacity=".25"/><ellipse cx="981.4" cy="379.3" rx="1.9" ry="0.8" fill="#3a2428" opacity=".8"/><ellipse cx="989.2" cy="379.3" rx="1.9" ry="0.8" fill="#3a2428" opacity=".8"/><path d="M979.0 377.4q2.4 -0.9 4.7 0M986.9 377.4q2.4 -0.9 4.7 0" stroke="#3a2428" stroke-width="0.7" fill="none" opacity=".6"/><path d="M984.7 380.8l-0.9 3.1h2.8" stroke="#7a4a40" stroke-width="0.6" fill="none" opacity=".55"/><ellipse cx="985.3" cy="386.4" rx="3.0" ry="0.8" fill="#9a5450" opacity=".85"/></g></g>
</g>
<g clip-path="url(#cbl)"><rect x="655.7" y="402.2" width="118.5" height="67" fill="#2fa7e8"/>
<circle cx="658.7" cy="424.7" r="2.7" fill="#f8d21e"/>
<circle cx="665.2" cy="424.7" r="2.7" fill="#f8d21e"/>
<circle cx="655.7" cy="430.2" r="2.7" fill="#f8d21e"/>
<circle cx="662.0" cy="430.2" r="2.7" fill="#f8d21e"/>
<circle cx="658.7" cy="435.7" r="2.7" fill="#f8d21e"/>
<circle cx="655.7" cy="441.2" r="2.7" fill="#f8d21e"/>
<circle cx="668.2" cy="430.2" r="2.7" fill="#f8d21e"/>
<circle cx="763.2" cy="444.2" r="2.7" fill="#f8d21e"/>
<circle cx="769.7" cy="444.2" r="2.7" fill="#f8d21e"/>
<circle cx="772.8" cy="438.7" r="2.7" fill="#f8d21e"/>
<circle cx="766.4" cy="449.7" r="2.7" fill="#f8d21e"/>
<circle cx="772.8" cy="449.7" r="2.7" fill="#f8d21e"/>
<circle cx="763.2" cy="455.2" r="2.7" fill="#f8d21e"/>
<circle cx="769.7" cy="455.2" r="2.7" fill="#f8d21e"/>
<circle cx="772.8" cy="460.7" r="2.7" fill="#f8d21e"/>
<g fill="none" stroke="#bfe2f8" stroke-width=".7" opacity=".9"><circle cx="736.2" cy="420.7" r="4.6"/><circle cx="751.2" cy="422.7" r="4"/><circle cx="730.2" cy="451.7" r="5.4"/><circle cx="764.2" cy="427.7" r="3.6"/><circle cx="770.2" cy="426.7" r="3.6"/></g>
<path d="M682.1 413.7L693.6 424.9L682.1 436.1L670.6 424.9z" fill="url(#gdia)" stroke="#f4f9ff" stroke-width="1.3"/>
<path d="M708.2 413.7L719.7 424.9L708.2 436.1L696.7 424.9z" fill="url(#gdia)" stroke="#f4f9ff" stroke-width="1.3"/>
<path d="M669.2 426.5L680.7 437.7L669.2 448.9L657.7 437.7z" fill="url(#gdia)" stroke="#f4f9ff" stroke-width="1.3"/>
<path d="M695.3 426.5L706.8 437.7L695.3 448.9L683.8 437.7z" fill="url(#gdia)" stroke="#f4f9ff" stroke-width="1.3"/>
<path d="M721.4 426.5L732.9 437.7L721.4 448.9L709.9 437.7z" fill="url(#gdia)" stroke="#f4f9ff" stroke-width="1.3"/>
<path d="M682.1 439.3L693.6 450.5L682.1 461.7L670.6 450.5z" fill="url(#gdia)" stroke="#f4f9ff" stroke-width="1.3"/>
<path d="M708.2 439.3L719.7 450.5L708.2 461.7L696.7 450.5z" fill="url(#gdia)" stroke="#f4f9ff" stroke-width="1.3"/>
<path d="M656.2 439.3L667.7 450.5L656.2 461.7L644.7 450.5z" fill="url(#gdia)" stroke="#f4f9ff" stroke-width="1.3"/>
<path d="M669.2 452.1L680.7 463.3L669.2 474.5L657.7 463.3z" fill="url(#gdia)" stroke="#f4f9ff" stroke-width="1.3"/>
<path d="M695.3 452.1L706.8 463.3L695.3 474.5L683.8 463.3z" fill="url(#gdia)" stroke="#f4f9ff" stroke-width="1.3"/>
<path d="M721.4 452.1L732.9 463.3L721.4 474.5L709.9 463.3z" fill="url(#gdia)" stroke="#f4f9ff" stroke-width="1.3"/>
<rect x="655.7" y="402.2" width="118.5" height="15.2" fill="url(#gcream)"/>
<g filter="url(#b1)">
<path d="M679.6 420.7h5c0 4-1 5-2.5 5.4v2.2h1.6v1.6h-3.2v-1.6h1.6v-2.2c-1.5-.4-2.5-1.4-2.5-5.4z" fill="#d89a28"/>
<rect x="706.2" y="420.7" width="2.2" height="8.4" rx="1" fill="#3a7ad0"/><rect x="709.0" y="420.7" width="2.2" height="8.4" rx="1" fill="#e86a90"/><circle cx="707.3000000000001" cy="420.09999999999997" r="1.3" fill="#7a4a30"/><circle cx="710.1" cy="420.09999999999997" r="1.3" fill="#c89030"/>
<path d="M663.2 438.7l6-2.6 6.5 2.6-6.2 3z" fill="#b87a3a"/><rect x="666.2" y="434.7" width="1.6" height="3" fill="#f0e8e0"/><rect x="669.8000000000001" y="434.3" width="1.6" height="3.4" fill="#f0e8e0"/>
<rect x="691.2" y="433.7" width="2" height="8" rx="1" fill="#e86a90"/><rect x="694.2" y="434.7" width="2" height="7.6" rx="1" fill="#4a8ae0"/><rect x="697.2" y="433.7" width="2" height="8" rx="1" fill="#5ab86a"/>
<ellipse cx="718.8000000000001" cy="437.09999999999997" rx="2.6" ry="3.2" fill="#e8c030"/><ellipse cx="723.8000000000001" cy="438.09999999999997" rx="2.6" ry="3.2" fill="#7a4ab0"/>
<ellipse cx="682.2" cy="451.7" rx="5" ry="2.2" fill="#e8c470"/><ellipse cx="709.2" cy="451.3" rx="4.6" ry="2" fill="#d8923a"/><rect x="706.2" y="452.3" width="6" height="1.4" fill="#8a5a2a"/>
</g>
<g font-family="Liberation Serif,serif" font-size="1.9" font-weight="bold" fill="#4a4a48" text-anchor="middle">
<text x="709.7" y="405.3">Комунальний заклад</text>
<text x="709.7" y="408.2" textLength="55">«Роменський центр позашкільної освіти та роботи</text>
<text x="709.7" y="411.0" textLength="54">з талановитою молоддю імені Івана Кавалерідзе»</text>
<text x="713.2" y="413.8" textLength="45">Роменської міської ради Сумської області</text></g>
<circle cx="763.5" cy="409.3" r="6" fill="#f3e37e"/><circle cx="762.2" cy="409.7" r="2.6" fill="#c8502a"/><circle cx="765.6" cy="410.09999999999997" r="2" fill="#6aa83a"/><circle cx="763.6" cy="406.7" r="1.6" fill="#d88a2a"/>
<g font-family="Liberation Serif,serif" font-size="3.7" font-weight="bold" fill="#e8f4ff" opacity=".92">
<text x="723.8000000000001" y="424.5" textLength="10.2" lengthAdjust="spacingAndGlyphs">МРІЙ</text>
<text x="730.0" y="430.3" textLength="23.8" lengthAdjust="spacingAndGlyphs">ВІДКРИВАЙ</text>
<text x="736.7" y="436.09999999999997" textLength="24.8" lengthAdjust="spacingAndGlyphs">ПЕРЕМАГАЙ</text></g>
<g filter="url(#b1)"><path d="M708 469c1-7 4-11 10-12h22c8 1 12 5 14 12z" fill="#2a2430"/><path d="M712 458c-1-9 0-16 2-21 3-5 6-7 11-7 6 0 9 3 11 8 2 6 2 13 1 20z" fill="#e0c286"/><ellipse cx="725" cy="446.5" rx="8" ry="10.4" fill="#d8aa94"/><path d="M716 441q8-8 17-1l1-5q-9-7-19 0z" fill="#e0c286"/><g transform="rotate(0 725 446.5)"><ellipse cx="729.4" cy="447.5" rx="3.6" ry="8.3" fill="#8a5a4a" opacity=".28"/><ellipse cx="725.0" cy="454.6" rx="4.8" ry="2.1" fill="#8a5a4a" opacity=".25"/><ellipse cx="721.6" cy="445.3" rx="1.6" ry="0.8" fill="#4a3430" opacity=".8"/><ellipse cx="728.4" cy="445.3" rx="1.6" ry="0.8" fill="#4a3430" opacity=".8"/><path d="M719.6 443.5q2.0 -0.8 4.0 0M726.4 443.5q2.0 -0.8 4.0 0" stroke="#4a3430" stroke-width="0.6" fill="none" opacity=".6"/><path d="M724.5 446.7l-0.8 2.9h2.4" stroke="#8a5a4a" stroke-width="0.5" fill="none" opacity=".55"/><ellipse cx="725.0" cy="451.9" rx="2.6" ry="0.7" fill="#b05a58" opacity=".85"/></g></g>
</g>
<g clip-path="url(#cav2)"><rect x="805" y="409" width="55" height="55" fill="#c9c04e"/>
<g filter="url(#b2)">
<rect x="805" y="409" width="55" height="14" fill="#a8b860"/><rect x="838" y="409" width="20" height="10" fill="#d8e4d0"/>
<rect x="806" y="409" width="8" height="30" fill="#e8e070"/>
<rect x="805" y="446" width="55" height="18" fill="#e4d25a"/>
<rect x="845" y="420" width="14" height="24" fill="#d8c850"/>
</g><g filter="url(#b1)">
<path d="M807 430l5 26" stroke="#3a3020" stroke-width="1.8"/><path d="M818 409v22" stroke="#3a3020" stroke-width="2.2"/><path d="M839 409v8M855 418v22" stroke="#4a4028" stroke-width="1.3"/>
<path d="M812 464c1-9 5-14 12-16h18c7 1 11 5 13 9v7z" fill="#a99a8a"/>
<path d="M818 448c-2-10-1-20 2-26 3-6 8-9 14-9 7 0 12 4 14 11 2 8 2 18 0 26-4 3-8 0-10-3h-10c-3 3-7 3-10 1z" fill="#57392f"/>
<ellipse cx="834.5" cy="434" rx="9.2" ry="12.6" fill="#d9a393"/>
<path d="M824 428q8-12 19-6l1-4q-10-8-21 2z" fill="#57392f"/>
<g transform="rotate(6 834.5 434)"><ellipse cx="839.6" cy="435.3" rx="4.1" ry="10.1" fill="#8a5a4a" opacity=".28"/><ellipse cx="834.5" cy="443.8" rx="5.5" ry="2.5" fill="#8a5a4a" opacity=".25"/><ellipse cx="830.6" cy="432.5" rx="1.8" ry="0.9" fill="#3a2a28" opacity=".8"/><ellipse cx="838.4" cy="432.5" rx="1.8" ry="0.9" fill="#3a2a28" opacity=".8"/><path d="M828.3 430.3q2.3 -1.0 4.6 0M836.1 430.3q2.3 -1.0 4.6 0" stroke="#3a2a28" stroke-width="0.8" fill="none" opacity=".6"/><path d="M833.9 434.3l-0.9 3.5h2.8" stroke="#8a5a4a" stroke-width="0.6" fill="none" opacity=".55"/><ellipse cx="834.5" cy="440.6" rx="2.9" ry="0.9" fill="#b05a58" opacity=".85"/></g>
</g></g>
</svg>
<div class="lbl" id="l0" style="left:658.3px;top:124.1px;width:114.6px;padding-left:14.2px;letter-spacing:-0.09px;"><svg class="mic" width="9.2" height="9.6" viewBox="0 0 10 10.4"><rect x="3" y="0.9" width="4" height="5.6" rx="2" fill="#e25252"/><path d="M1.900 4.800c0 2.100 1.400 3.300 3.100 3.300s3.100-1.200 3.100-3.300" fill="none" stroke="#e25252" stroke-width="1"/><path d="M5 8.100v1.300M3.200 9.600h3.600" fill="none" stroke="#e25252" stroke-width="1.100"/><path d="M9.300 0.500L0.700 9.900" stroke="#e25252" stroke-width="1.200"/></svg><span>Алла Мартиненко_ОЦП...</span></div>
<div class="lbl" id="l1" style="left:776.3px;top:124.1px;width:98.4px;padding-left:14.2px;"><svg class="mic" width="9.2" height="9.6" viewBox="0 0 10 10.4"><rect x="3" y="0.9" width="4" height="5.6" rx="2" fill="#e25252"/><path d="M1.900 4.800c0 2.100 1.400 3.300 3.100 3.300s3.100-1.200 3.100-3.300" fill="none" stroke="#e25252" stroke-width="1"/><path d="M5 8.100v1.300M3.200 9.600h3.600" fill="none" stroke="#e25252" stroke-width="1.100"/><path d="M9.300 0.500L0.700 9.900" stroke="#e25252" stroke-width="1.200"/></svg><span>Кристина Перетятько</span></div>
<div class="lbl" id="l2" style="left:893.1px;top:124.1px;width:78.8px;padding-left:14.2px;letter-spacing:0.09px;"><svg class="mic" width="9.2" height="9.6" viewBox="0 0 10 10.4"><rect x="3" y="0.9" width="4" height="5.6" rx="2" fill="#e25252"/><path d="M1.900 4.800c0 2.100 1.400 3.300 3.100 3.300s3.100-1.200 3.100-3.300" fill="none" stroke="#e25252" stroke-width="1"/><path d="M5 8.100v1.300M3.200 9.600h3.600" fill="none" stroke="#e25252" stroke-width="1.100"/><path d="M9.300 0.500L0.700 9.900" stroke="#e25252" stroke-width="1.200"/></svg><span>Yulia Marchenko</span></div>
<div class="lbl" id="l3" style="left:658.2px;top:190.2px;width:44.5px;padding-left:14.2px;"><svg class="mic" width="9.2" height="9.6" viewBox="0 0 10 10.4"><rect x="3" y="0.9" width="4" height="5.6" rx="2" fill="#e25252"/><path d="M1.900 4.800c0 2.100 1.400 3.300 3.100 3.300s3.100-1.200 3.100-3.300" fill="none" stroke="#e25252" stroke-width="1"/><path d="M5 8.100v1.300M3.200 9.600h3.600" fill="none" stroke="#e25252" stroke-width="1.100"/><path d="M9.300 0.500L0.700 9.900" stroke="#e25252" stroke-width="1.200"/></svg><span>Оксана</span></div>
<div class="lbl" id="l4" style="left:776.3px;top:190.2px;width:34.3px;padding-left:14.2px;"><svg class="mic" width="9.2" height="9.6" viewBox="0 0 10 10.4"><rect x="3" y="0.9" width="4" height="5.6" rx="2" fill="#e25252"/><path d="M1.900 4.800c0 2.100 1.400 3.300 3.100 3.300s3.100-1.200 3.100-3.300" fill="none" stroke="#e25252" stroke-width="1"/><path d="M5 8.100v1.300M3.200 9.600h3.600" fill="none" stroke="#e25252" stroke-width="1.100"/><path d="M9.300 0.500L0.700 9.900" stroke="#e25252" stroke-width="1.200"/></svg><span>Лілія</span></div>
<div class="lbl" id="l5" style="left:893.2px;top:190.2px;width:84.2px;padding-left:14.2px;"><svg class="mic" width="9.2" height="9.6" viewBox="0 0 10 10.4"><rect x="3" y="0.9" width="4" height="5.6" rx="2" fill="#e25252"/><path d="M1.900 4.800c0 2.100 1.400 3.300 3.100 3.300s3.100-1.200 3.100-3.300" fill="none" stroke="#e25252" stroke-width="1"/><path d="M5 8.100v1.300M3.200 9.600h3.600" fill="none" stroke="#e25252" stroke-width="1.100"/><path d="M9.300 0.500L0.700 9.900" stroke="#e25252" stroke-width="1.200"/></svg><span>Оксана Глущенко</span></div>
<div class="lbl" id="l6" style="left:658.2px;top:256.3px;width:94.2px;padding-left:14.2px;letter-spacing:-0.13px;"><svg class="mic" width="9.2" height="9.6" viewBox="0 0 10 10.4"><rect x="3" y="0.9" width="4" height="5.6" rx="2" fill="#e25252"/><path d="M1.900 4.800c0 2.100 1.400 3.300 3.100 3.300s3.100-1.200 3.100-3.300" fill="none" stroke="#e25252" stroke-width="1"/><path d="M5 8.100v1.300M3.200 9.600h3.600" fill="none" stroke="#e25252" stroke-width="1.100"/><path d="M9.300 0.500L0.700 9.900" stroke="#e25252" stroke-width="1.200"/></svg><span>Александр Власенко</span></div>
<div class="lbl" id="l7" style="left:776.0px;top:256.3px;width:44.9px;padding-left:14.2px;letter-spacing:-0.09px;"><svg class="mic" width="9.2" height="9.6" viewBox="0 0 10 10.4"><rect x="3" y="0.9" width="4" height="5.6" rx="2" fill="#e25252"/><path d="M1.900 4.800c0 2.100 1.400 3.300 3.100 3.300s3.100-1.200 3.100-3.300" fill="none" stroke="#e25252" stroke-width="1"/><path d="M5 8.100v1.300M3.200 9.600h3.600" fill="none" stroke="#e25252" stroke-width="1.100"/><path d="M9.300 0.500L0.700 9.900" stroke="#e25252" stroke-width="1.200"/></svg><span>Svitlana</span></div>
<div class="lbl" id="l8" style="left:893.1px;top:256.3px;width:31.3px;padding-left:2.4px;letter-spacing:-0.1px;"><span>English</span></div>
<div class="lbl" id="l9" style="left:658.6px;top:322.5px;width:72.2px;padding-left:14.2px;"><svg class="mic" width="9.2" height="9.6" viewBox="0 0 10 10.4"><rect x="3" y="0.9" width="4" height="5.6" rx="2" fill="#e25252"/><path d="M1.900 4.800c0 2.100 1.400 3.300 3.100 3.300s3.100-1.200 3.100-3.300" fill="none" stroke="#e25252" stroke-width="1"/><path d="M5 8.100v1.300M3.200 9.600h3.600" fill="none" stroke="#e25252" stroke-width="1.100"/><path d="M9.300 0.500L0.700 9.900" stroke="#e25252" stroke-width="1.200"/></svg><span>Ніна Полякова</span></div>
<div class="lbl" id="l10" style="left:776.3px;top:322.5px;width:33.4px;padding-left:14.2px;"><svg class="mic" width="9.2" height="9.6" viewBox="0 0 10 10.4"><rect x="3" y="0.9" width="4" height="5.6" rx="2" fill="#e25252"/><path d="M1.900 4.800c0 2.100 1.400 3.300 3.100 3.300s3.100-1.200 3.100-3.300" fill="none" stroke="#e25252" stroke-width="1"/><path d="M5 8.100v1.300M3.200 9.600h3.600" fill="none" stroke="#e25252" stroke-width="1.100"/><path d="M9.300 0.500L0.700 9.900" stroke="#e25252" stroke-width="1.200"/></svg><span>Ніна</span></div>
<div class="lbl" id="l11" style="left:893.5px;top:322.5px;width:85.1px;padding-left:14.2px;letter-spacing:-0.05px;"><svg class="mic" width="9.2" height="9.6" viewBox="0 0 10 10.4"><rect x="3" y="0.9" width="4" height="5.6" rx="2" fill="#e25252"/><path d="M1.900 4.800c0 2.100 1.400 3.300 3.100 3.300s3.100-1.200 3.100-3.300" fill="none" stroke="#e25252" stroke-width="1"/><path d="M5 8.100v1.300M3.200 9.600h3.600" fill="none" stroke="#e25252" stroke-width="1.100"/><path d="M9.300 0.500L0.700 9.900" stroke="#e25252" stroke-width="1.200"/></svg><span>Наталія Клименко</span></div>
<div class="lbl" id="l12" style="left:658.9px;top:388.7px;width:71.9px;padding-left:14.2px;"><svg class="mic" width="9.2" height="9.6" viewBox="0 0 10 10.4"><rect x="3" y="0.9" width="4" height="5.6" rx="2" fill="#e25252"/><path d="M1.900 4.800c0 2.100 1.400 3.300 3.100 3.300s3.100-1.200 3.100-3.300" fill="none" stroke="#e25252" stroke-width="1"/><path d="M5 8.100v1.300M3.200 9.600h3.600" fill="none" stroke="#e25252" stroke-width="1.100"/><path d="M9.300 0.500L0.700 9.900" stroke="#e25252" stroke-width="1.200"/></svg><span>Віктория Муха</span></div>
<div class="lbl" id="l13" style="left:776.3px;top:388.7px;width:73.3px;padding-left:14.2px;"><svg class="mic" width="9.2" height="9.6" viewBox="0 0 10 10.4"><rect x="3" y="0.9" width="4" height="5.6" rx="2" fill="#e25252"/><path d="M1.900 4.800c0 2.100 1.400 3.300 3.100 3.300s3.100-1.200 3.100-3.300" fill="none" stroke="#e25252" stroke-width="1"/><path d="M5 8.100v1.300M3.200 9.600h3.600" fill="none" stroke="#e25252" stroke-width="1.100"/><path d="M9.300 0.500L0.700 9.900" stroke="#e25252" stroke-width="1.200"/></svg><span>Тетяна Огієнко</span></div>
<div class="lbl" id="l14" style="left:893.1px;top:388.7px;width:69.7px;padding-left:14.2px;letter-spacing:-0.06px;"><svg class="mic" width="9.2" height="9.6" viewBox="0 0 10 10.4"><rect x="3" y="0.9" width="4" height="5.6" rx="2" fill="#e25252"/><path d="M1.900 4.800c0 2.100 1.400 3.300 3.100 3.300s3.100-1.200 3.100-3.300" fill="none" stroke="#e25252" stroke-width="1"/><path d="M5 8.100v1.300M3.200 9.600h3.600" fill="none" stroke="#e25252" stroke-width="1.100"/><path d="M9.300 0.500L0.700 9.900" stroke="#e25252" stroke-width="1.200"/></svg><span>Євгенія Рибка</span></div>
<div class="lbl" id="l15" style="left:658.6px;top:454.9px;width:86.3px;padding-left:14.2px;"><svg class="mic" width="9.2" height="9.6" viewBox="0 0 10 10.4"><rect x="3" y="0.9" width="4" height="5.6" rx="2" fill="#e25252"/><path d="M1.900 4.800c0 2.100 1.400 3.300 3.100 3.300s3.100-1.200 3.100-3.300" fill="none" stroke="#e25252" stroke-width="1"/><path d="M5 8.100v1.300M3.200 9.600h3.600" fill="none" stroke="#e25252" stroke-width="1.100"/><path d="M9.300 0.500L0.700 9.900" stroke="#e25252" stroke-width="1.200"/></svg><span>Центр позашкілля</span></div>
<div class="lbl" id="l16" style="left:776.6px;top:454.9px;width:81.1px;padding-left:14.2px;letter-spacing:-0.1px;"><svg class="mic" width="9.2" height="9.6" viewBox="0 0 10 10.4"><rect x="3" y="0.9" width="4" height="5.6" rx="2" fill="#e25252"/><path d="M1.900 4.800c0 2.100 1.400 3.300 3.100 3.300s3.100-1.200 3.100-3.300" fill="none" stroke="#e25252" stroke-width="1"/><path d="M5 8.100v1.300M3.200 9.600h3.600" fill="none" stroke="#e25252" stroke-width="1.100"/><path d="M9.300 0.500L0.700 9.900" stroke="#e25252" stroke-width="1.200"/></svg><span>Тетяна Гримайло</span></div>
<div class="lbl" id="l17" style="left:893.2px;top:454.9px;width:112.2px;padding-left:14.2px;"><svg class="mic" width="9.2" height="9.6" viewBox="0 0 10 10.4"><rect x="3" y="0.9" width="4" height="5.6" rx="2" fill="#e25252"/><path d="M1.900 4.800c0 2.100 1.400 3.300 3.100 3.300s3.100-1.200 3.100-3.300" fill="none" stroke="#e25252" stroke-width="1"/><path d="M5 8.100v1.300M3.200 9.600h3.600" fill="none" stroke="#e25252" stroke-width="1.100"/><path d="M9.300 0.500L0.700 9.900" stroke="#e25252" stroke-width="1.200"/></svg><span>Недригайлівський БДЮТ</span></div>
<div class="big" style="left:656.3px;top:164.0px;letter-spacing:0px;">Оксана</div>
<div class="big" style="left:890.7px;top:164.0px;letter-spacing:0.27px;">Оксана&nbsp; Глущен...</div>
<div class="big" style="left:773.5px;top:230.1px;letter-spacing:0px;">Svitlana</div>
<div class="big" style="left:890.7px;top:428.7px;letter-spacing:0.43px;">Недригайлівсь...</div>
<div class="abs" style="left:688.8px;top:222px;width:52.2px;text-align:center;color:#fff;font-size:28.5px;line-height:32px;-webkit-text-stroke:.4px #fff;">A</div>
<div id="taskbar" class="abs"></div>
<svg class="abs" style="left:0;top:0" width="1024" height="576" viewBox="0 0 1024 576">
<defs>
<linearGradient id="wl" gradientUnits="userSpaceOnUse" x1="416" y1="552" x2="432" y2="568"><stop offset="0" stop-color="#45bdf6"/><stop offset="1" stop-color="#0a6ad6"/></linearGradient>
<linearGradient id="cop" x1="0" y1="0" x2="1" y2="1"><stop offset="0" stop-color="#2a7de0"/><stop offset=".35" stop-color="#35c0d8"/><stop offset=".6" stop-color="#e8b040"/><stop offset=".8" stop-color="#e85a90"/><stop offset="1" stop-color="#a050e0"/></linearGradient>
<linearGradient id="cop1" gradientUnits="userSpaceOnUse" x1="512" y1="552" x2="508" y2="567"><stop offset="0" stop-color="#1a5ad8"/><stop offset=".35" stop-color="#2ab0c8"/><stop offset=".6" stop-color="#8ad048"/><stop offset=".8" stop-color="#f0c030"/><stop offset="1" stop-color="#f07038"/></linearGradient><linearGradient id="cop2" gradientUnits="userSpaceOnUse" x1="517" y1="552" x2="512" y2="567"><stop offset="0" stop-color="#7a50e0"/><stop offset=".45" stop-color="#c860d8"/><stop offset=".75" stop-color="#f06090"/><stop offset="1" stop-color="#f08040"/></linearGradient><linearGradient id="tv" x1="0" y1="0" x2="1" y2="1"><stop offset="0" stop-color="#ffffff"/><stop offset="1" stop-color="#b8b8b8"/></linearGradient>
</defs>
<!-- window controls -->
<g fill="none" stroke="#e4e4e4" stroke-width="1">
<path d="M943.7 14.6h7.2"/>
<rect x="973.3" y="12" width="6.6" height="6.8" rx="1.4"/>
<path d="M975.6 12v-.4a1.400 1.400 0 0 1 1.400 -1.400h3.600a1.400 1.400 0 0 1 1.400 1.400v3.800a1.400 1.400 0 0 1 -1.400 1.400h-.6"/>
<path d="M1004 11l7.800 7.800M1011.800 11l-7.800 7.800"/>
</g>
<!-- taskbar line -->
<rect x="0" y="542" width="1024" height="1.6" fill="#0b0d0f"/>
<!-- start -->
<g fill="url(#wl)"><rect x="416.200" y="552.200" width="7.300" height="7.300" rx=".8"/><rect x="424.300" y="552.200" width="7.300" height="7.300" rx=".8"/><rect x="416.200" y="560.400" width="7.300" height="7.300" rx=".8"/><rect x="424.300" y="560.400" width="7.300" height="7.300" rx=".8"/></g>
<!-- search -->
<circle cx="453.200" cy="558.400" r="4.700" fill="none" stroke="#1e1e1e" stroke-width="1.500"/><path d="M456.700 562l4.300 4.300" stroke="#1e1e1e" stroke-width="1.700" stroke-linecap="round"/>
<!-- task view -->
<rect x="475.500" y="556.400" width="11.200" height="10.300" rx="1" fill="#222"/><rect x="480.300" y="552.100" width="11.300" height="10.100" rx="1" fill="url(#tv)" opacity=".92"/>
<!-- copilot -->
<path d="M514.300 553.700C509.500 552.800 507.300 556.300 506.800 559.300C506.300 562.300 507.800 564.300 510.300 564.800" fill="none" stroke="url(#cop1)" stroke-width="4.200" stroke-linecap="round"/>
<path d="M511.700 564.900C516.500 565.800 518.700 562.300 519.200 559.300C519.700 556.300 518.200 554.300 515.700 553.800" fill="none" stroke="url(#cop2)" stroke-width="4.200" stroke-linecap="round"/>
<path d="M512.600 556.500l2.600-.3-2.400 6.300-2.500.300z" fill="#f6f0fa" opacity=".75"/>
<!-- folder -->
<path d="M534.400 554.600a1.200 1.200 0 0 1 1.200-1.200h4.200l1.800 1.800h8a1.200 1.200 0 0 1 1.200 1.200v9.200a1.200 1.200 0 0 1-1.200 1.200h-14a1.200 1.200 0 0 1-1.200-1.200z" fill="#e6aa2e"/>
<path d="M534.400 556.400h16.400v9.200a1.200 1.200 0 0 1-1.200 1.200h-14a1.200 1.200 0 0 1-1.200-1.200z" fill="#f7cd4a"/>
<rect x="537.600" y="562.600" width="10" height="4.200" rx=".8" fill="#2787d8"/>
<!-- chrome -->
<circle cx="571" cy="559.400" r="8" fill="#e34133"/>
<path d="M571 559.400L564.100 555.400A8 8 0 0 0 571 567.400z" fill="#2da94f"/>
<path d="M571 559.400L571 567.400A8 8 0 0 0 577.900 555.400z" fill="#fcc31e"/>
<circle cx="571" cy="559.400" r="3.700" fill="#f2f2f2"/><circle cx="571" cy="559.400" r="2.900" fill="#3f83ec"/>
<circle cx="577.600" cy="553.800" r="5.300" fill="#3ab0ba"/>
<text x="577.600" y="556.600" font-family="Liberation Sans,sans-serif" font-size="7.600" font-weight="bold" fill="#e0453e" text-anchor="middle">5</text>
<rect x="569" y="570.800" width="4.600" height="1.300" rx=".6" fill="#8a8f90"/>
<!-- zoom -->
<rect x="588.300" y="547.200" width="25.300" height="25.400" rx="2.500" fill="#dcf6f5"/>
<rect x="592.400" y="550.600" width="16.900" height="17.600" rx="6.400" fill="#0c5cf8"/>
<text x="600.850" y="560.900" font-family="Liberation Sans,sans-serif" font-size="4.900" font-weight="bold" fill="#fff" text-anchor="middle">zoom</text>
<rect x="596.300" y="570.400" width="9.700" height="1.600" rx=".8" fill="#1b7787"/>
<!-- tray -->
<path d="M760.800 561.600l3.700-3.800 3.700 3.800" fill="none" stroke="#222" stroke-width="1.100"/>
<g><circle cx="784.500" cy="556" r="1.700" fill="#5b62d0"/><circle cx="788.300" cy="556.400" r="1.300" fill="#7b83eb"/><rect x="780.200" y="557.600" width="6.400" height="6.600" rx="1" fill="#4b53bc"/><rect x="785.600" y="558.200" width="4.400" height="5" rx="1.400" fill="#7b83eb"/><circle cx="788.300" cy="561.900" r="3" fill="#27a844"/><path d="M786.900 561.900l1 1 1.800-2" fill="none" stroke="#fff" stroke-width=".8"/></g>
<circle cx="807.600" cy="559.700" r="6.100" fill="#1a5fe6"/><text x="807.400" y="561.600" font-family="Liberation Sans,sans-serif" font-size="5.600" font-weight="bold" fill="#fff" text-anchor="middle">zm</text><circle cx="811.200" cy="563.600" r="1.500" fill="#f04040"/>
<rect x="823" y="554.200" width="11" height="5.400" fill="#1a58c0"/><rect x="823" y="559.600" width="11" height="5.300" fill="#f8d220"/><circle cx="828.500" cy="560" r="4" fill="#141414"/><path d="M826.200 559.200l3.600-1.600v4.400l-3.600-1.400z" fill="#fff"/>
<rect x="844.600" y="554.200" width="10.600" height="10.700" fill="#d81a22"/><path d="M848 562.500c3-1 4.500-3.500 4-5.500-.5-1.500-3-1.200-3.600.6M850.500 559.500l2.500 3" fill="none" stroke="#fff" stroke-width="1"/><circle cx="846.100" cy="563.500" r="1.400" fill="#f4e82a"/>
<g fill="none" stroke="#4f858c" stroke-width=".9"><rect x="866" y="554.400" width="2.600" height="5" rx="1.300" fill="#7aa8ae"/><path d="M864.600 558c0 2 1.200 3.200 2.700 3.200s2.700-1.200 2.700-3.200M867.300 561.200v1.600"/><path d="M872 560.600l6.600-2.600-2.600 6.600-1-3z"/></g>
<text x="889.500" y="562.700" font-family="Liberation Sans,sans-serif" font-size="7.500" fill="#262626" textLength="13.600" lengthAdjust="spacingAndGlyphs">УКР</text>
<g fill="none" stroke="#2a2a2a" stroke-width=".9"><path d="M916.800 558.200a7 7 0 0 1 9.800 0M918.400 560a4.600 4.600 0 0 1 6.600 0M920 561.600a2.400 2.400 0 0 1 3.400 0"/><circle cx="921.700" cy="562.800" r=".6" fill="#2a2a2a"/>
<path d="M932.300 558h1.800l2.400-2v7l-2.400-2h-1.800z"/><path d="M938 557.600a2.600 2.600 0 0 1 0 3.800M939.600 556.200a4.600 4.600 0 0 1 0 6.600" opacity=".8"/></g>
<rect x="948.600" y="556.600" width="12" height="6.200" rx="1.800" fill="#2c9a34" stroke="#5a5f5c" stroke-width=".9"/><rect x="961.100" y="558.400" width="1" height="2.600" fill="#5a5f5c"/><path d="M954.400 555v3.600l-1.800-.2 2 2.400 2-2.400-1.600.2z" fill="#1a1a1a"/>
<g font-family="Liberation Sans,sans-serif" font-size="7.400" fill="#2e2e2e" text-anchor="end"><text x="1011.400" y="557.200">11:12</text><text x="1011.400" y="568.100" textLength="37.800" lengthAdjust="spacingAndGlyphs">21.04.2026</text></g>
</svg>

</body>
</html>
